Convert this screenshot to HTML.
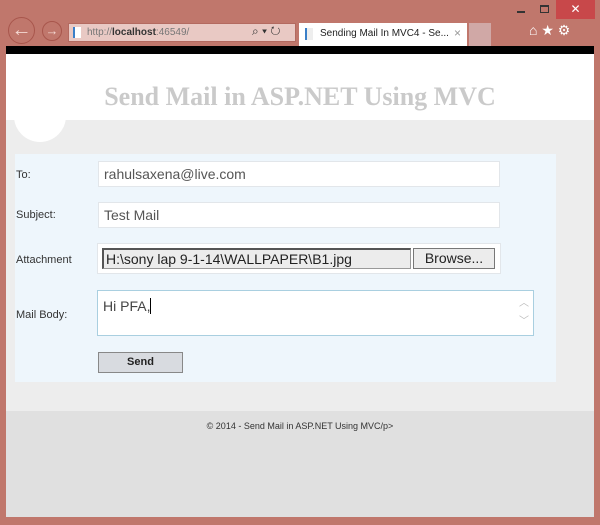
<!DOCTYPE html>
<html><head><meta charset="utf-8"><style>
*{margin:0;padding:0;box-sizing:border-box}
body{width:600px;height:525px;background:#c0776c;position:relative;overflow:hidden;font-family:"Liberation Sans",sans-serif}
.a{position:absolute}
.lbl{font-size:11px;color:#333;left:16px}
.inp{background:#fff;border:1px solid #e2e6ea;font-size:14px;color:#555;padding:0 0 0 5px}
</style></head><body>
<div class="a" style="left:8px;top:17px;width:27px;height:27px;border:1px solid #a8564c;border-radius:50%;color:#f4d8d2;font-size:20px;line-height:24px;text-align:center">&#8592;</div>
<div class="a" style="left:42px;top:21px;width:20px;height:20px;border:1px solid #a8564c;border-radius:50%;color:#f4d8d2;font-size:13px;line-height:18px;text-align:center">&#8594;</div>
<div class="a" style="left:68px;top:23px;width:228px;height:19px;background:#e9c9c4;border:1px solid #b36a60"></div>
<div class="a" style="left:73px;top:27px;width:8px;height:11px;background:#fff;border-left:2px solid #3a7fc8"></div>
<div class="a" style="left:87px;top:27px;font-size:10px;color:#777">http://<b style="color:#333">localhost</b>:46549/</div>
<div class="a" style="left:252px;top:24px;font-size:12px;color:#333">&#x2315; ▾ &#x21bb;</div>
<div class="a" style="left:299px;top:23px;width:168px;height:23px;background:#fff"></div>
<div class="a" style="left:305px;top:28px;width:8px;height:12px;background:#eee;border-left:2px solid #3a7fc8"></div>
<div class="a" style="left:320px;top:28px;font-size:10px;color:#222">Sending Mail In MVC4 - Se...</div>
<div class="a" style="left:454px;top:26px;font-size:12px;color:#999">×</div>
<div class="a" style="left:469px;top:23px;width:22px;height:23px;background:#d0a8a6"></div>
<div class="a" style="left:517px;top:11px;width:8px;height:2px;background:#333"></div>
<div class="a" style="left:540px;top:5px;width:9px;height:8px;border:1px solid #333;border-top-width:2px"></div>
<div class="a" style="left:556px;top:0;width:39px;height:19px;background:#c8484a;color:#fff;text-align:center;font-size:12px;line-height:19px">✕</div>
<div class="a" style="left:529px;top:22px;color:#fff;font-size:14px">⌂ ★ ⚙</div>
<div class="a" style="left:6px;top:46px;width:588px;height:8px;background:#000"></div>
<div class="a" style="left:6px;top:54px;width:588px;height:66px;background:#fff"></div>
<div class="a" style="left:6px;top:120px;width:588px;height:291px;background:#ededed"></div>
<div class="a" style="left:14px;top:110px;width:52px;height:32px;background:#fff;border-radius:0 0 26px 26px"></div>
<div class="a" style="left:6px;top:82px;width:588px;text-align:center;font-family:'Liberation Serif',serif;font-weight:bold;font-size:26px;color:#cacaca">Send Mail in ASP.NET Using MVC</div>
<div class="a" style="left:15px;top:154px;width:541px;height:228px;background:#eef6fc"></div>
<div class="a lbl" style="top:169px">To:</div>
<div class="a inp" style="left:98px;top:161px;width:402px;height:26px;line-height:24px">rahulsaxena@live.com</div>
<div class="a lbl" style="top:209px">Subject:</div>
<div class="a inp" style="left:98px;top:202px;width:402px;height:26px;line-height:24px">Test Mail</div>
<div class="a lbl" style="top:254px">Attachment</div>
<div class="a" style="left:97px;top:243px;width:404px;height:31px;background:#fff;border:1px solid #e2e6ea"></div>
<div class="a" style="left:102px;top:248px;width:309px;height:21px;background:#ececec;border:1px solid #999;border-top:2px solid #555;border-left:2px solid #555;font-size:14px;line-height:18px;color:#222;padding-left:2px">H:\sony lap 9-1-14\WALLPAPER\B1.jpg</div>
<div class="a" style="left:413px;top:248px;width:82px;height:21px;background:#ececec;border:1px solid #777;font-size:14px;line-height:19px;text-align:center;color:#222">Browse...</div>
<div class="a lbl" style="top:309px">Mail Body:</div>
<div class="a" style="left:97px;top:290px;width:437px;height:46px;background:#fff;border:1px solid #a9cfe0;font-size:14px;color:#444;padding:7px 0 0 5px">Hi PFA, <span style="border-left:1px solid #000"></span></div>
<div class="a" style="left:519px;top:295px;font-size:10px;color:#bbb;line-height:18px">︿<br>﹀</div>
<div class="a" style="left:98px;top:352px;width:85px;height:21px;background:#d8dbe0;border:1px solid #888;font-size:11px;font-weight:bold;text-align:center;line-height:19px;color:#222">Send</div>
<div class="a" style="left:6px;top:411px;width:588px;height:106px;background:#e0e0e0"></div>
<div class="a" style="left:6px;top:421px;width:588px;text-align:center;font-size:9px;color:#333">© 2014 - Send Mail in ASP.NET Using MVC/p&gt;</div>
</body></html>
